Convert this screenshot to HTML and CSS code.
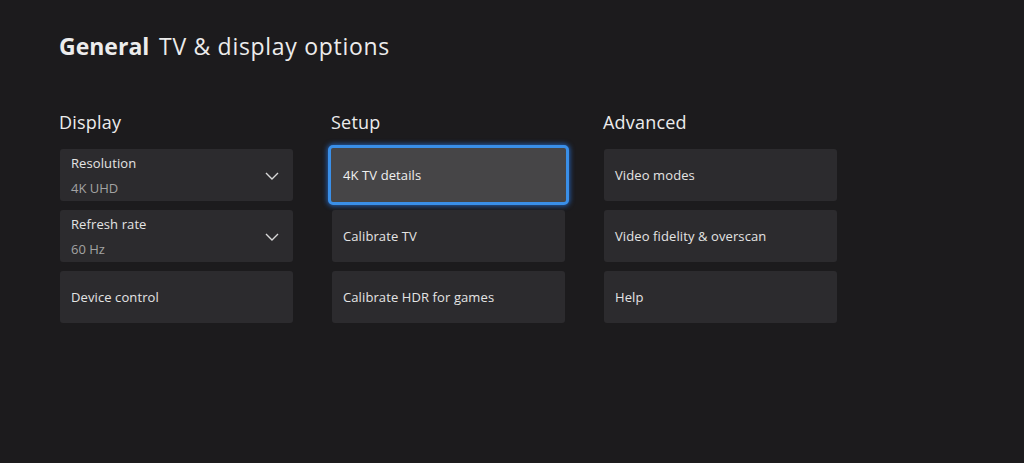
FILE: index.html
```html
<!DOCTYPE html>
<html lang="en">
<head>
<title>TV &amp; display options</title>
<meta charset="utf-8">
<link rel="stylesheet" href="styles.css">
</head>
<body>
	<h1 class="title"><b>General</b> <span class="sub">TV &amp; display options</span></h1>

	<div class="columns">
		<div class="col">
			<h2 class="col_head">Display</h2>
			<div class="tile two">
				<div>
					<div class="label">Resolution</div>
					<div class="value">4K UHD</div>
				</div>
				<svg class="chev" width="14" height="8" viewBox="0 0 14 8"><path d="M1 1 L7 7 L13 1" fill="none" stroke="#d8d8d8" stroke-width="1.4"/></svg>
			</div>
			<div class="tile two">
				<div>
					<div class="label">Refresh rate</div>
					<div class="value">60 Hz</div>
				</div>
				<svg class="chev" width="14" height="8" viewBox="0 0 14 8"><path d="M1 1 L7 7 L13 1" fill="none" stroke="#d8d8d8" stroke-width="1.4"/></svg>
			</div>
			<div class="tile"><span class="label">Device control</span></div>
		</div>

		<div class="col">
			<h2 class="col_head">Setup</h2>
			<div class="tile focus"><span class="label">4K TV details</span></div>
			<div class="tile"><span class="label">Calibrate TV</span></div>
			<div class="tile"><span class="label">Calibrate HDR for games</span></div>
		</div>

		<div class="col">
			<h2 class="col_head">Advanced</h2>
			<div class="tile"><span class="label">Video modes</span></div>
			<div class="tile"><span class="label">Video fidelity &amp; overscan</span></div>
			<div class="tile"><span class="label">Help</span></div>
		</div>
	</div>
</body>
</html>
```
FILE: styles.css
```css
body{
	margin: 0;
	background-color: #1c1b1d;
	color: #e8e8e8;
	font-family: "Open Sans", "Noto Sans", sans-serif;
	padding: 31px 0 0 60px;
}
.title{
	margin: 0 0 0 -1px;
	font-size: 22px;
	font-weight: 400;
	line-height: 30px;
	color: #ececec;
}
.title b{ font-size: 23px; font-weight: 700; margin-right: 4px; }
.title .sub{ font-size: 23px; letter-spacing: 0.7px; }

.columns{
	display: grid;
	grid-template-columns: 233px 233px 233px;
	column-gap: 39px;
	margin-top: 49px;
}
.col{
	display: flex;
	flex-direction: column;
	gap: 9px;
}
.col_head{
	margin: 0 0 6px -1px;
	font-size: 18px;
	font-weight: 400;
	line-height: 24px;
	color: #ececec;
	letter-spacing: 0.2px;
}

.tile{
	height: 52px;
	box-sizing: border-box;
	background: #2c2b2e;
	border-radius: 3px;
	padding: 0 14px 0 11px;
	display: flex;
	align-items: center;
	justify-content: space-between;
}
.label{ font-size: 13px; color: #e4e4e4; line-height: 18px; letter-spacing: 0.1px; }
.value{ font-size: 13px; color: #a3a3a3; line-height: 18px; margin-top: 7px; }
.two .label{ margin-top: 0; }
.chev{ margin-top: 2px; }

.tile.focus{
	height: 60px;
	margin: -4px;
	padding-left: 12px;
	background: #464547;
	border: 3px solid #3a8fe8;
	border-radius: 5px;
	box-shadow: 0 0 5px 1px rgba(40, 120, 230, 0.7);
}
.focus .label{ color: #f0f0f0; }
```
